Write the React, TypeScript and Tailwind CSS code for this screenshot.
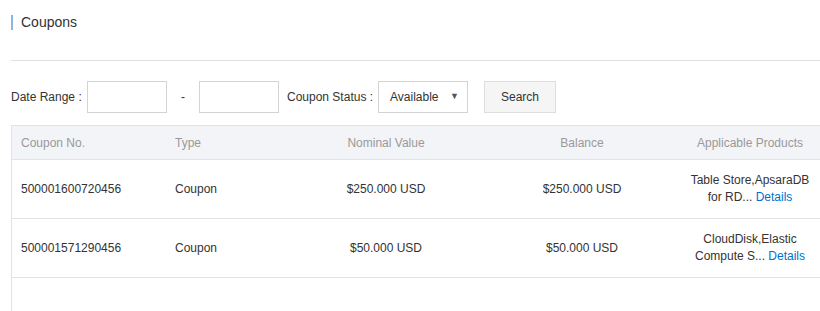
import React from 'react';

const ROWS = [
    { no: '500001600720456', type: 'Coupon', nominal: '$250.000 USD', balance: '$250.000 USD', products: ['Table Store,ApsaraDB', 'for RD...'] },
    { no: '500001571290456', type: 'Coupon', nominal: '$50.000 USD', balance: '$50.000 USD', products: ['CloudDisk,Elastic', 'Compute S...'] },
];

export default function App() {
    return (
        <div className="w-[820px] h-[311px] overflow-hidden bg-white pl-[11px] pt-[15px] font-['Liberation_Sans',Arial,sans-serif] text-[12px] text-[#333]">
            {/* title */}
            <div className="flex items-center h-[15px]">
                <div className="w-[2px] h-[15px] bg-[#88b7e0]" />
                <span className="ml-[8px] text-[14px] leading-[15px] text-[#333]">Coupons</span>
            </div>
            <div className="mt-[30px] h-px bg-[#e0e0e0]" />

            {/* filters */}
            <div className="mt-[20px] flex items-center h-[32px]">
                <span className="w-[76px]">Date Range :</span>
                <div className="w-[80px] h-[32px] border border-[#d3d3d3] bg-white" />
                <span className="w-[32px] text-center">-</span>
                <div className="w-[80px] h-[32px] border border-[#d3d3d3] bg-white" />
                <span className="ml-[8px] w-[91px]">Coupon Status :</span>
                <div className="w-[90px] h-[32px] border border-[#d3d3d3] bg-white flex items-center justify-between pl-[11px] pr-[8px]">
                    <span>Available</span>
                    <span className="text-[9px] text-[#555]">▼</span>
                </div>
                <button className="ml-[16px] w-[72px] h-[32px] border border-[#dedede] bg-[#f5f5f5] text-[12px] text-[#333]">Search</button>
            </div>

            {/* table */}
            <div className="mt-[12px] border-l border-[#e3e3e3] h-[200px]">
                <div className="flex items-center h-[35px] bg-[#f3f4f7] border-t border-b border-[#e3e3e3] text-[#999]">
                    <div className="w-[154px] pl-[9px]">Coupon No.</div>
                    <div className="w-[123px] pl-[9px]">Type</div>
                    <div className="w-[194px] text-center">Nominal Value</div>
                    <div className="w-[198px] text-center">Balance</div>
                    <div className="w-[138px] text-center">Applicable Products</div>
                </div>
                {ROWS.map((r) => (
                    <div key={r.no} className="flex items-center h-[59px] border-b border-[#e3e3e3]">
                        <div className="w-[154px] pl-[9px]">{r.no}</div>
                        <div className="w-[123px] pl-[9px]">{r.type}</div>
                        <div className="w-[194px] text-center">{r.nominal}</div>
                        <div className="w-[198px] text-center">{r.balance}</div>
                        <div className="w-[138px] text-center leading-[17px]">
                            <div>{r.products[0]}</div>
                            <div>
                                {r.products[1]} <span className="text-[#0070cc]">Details</span>
                            </div>
                        </div>
                    </div>
                ))}
            </div>
        </div>
    );
}
